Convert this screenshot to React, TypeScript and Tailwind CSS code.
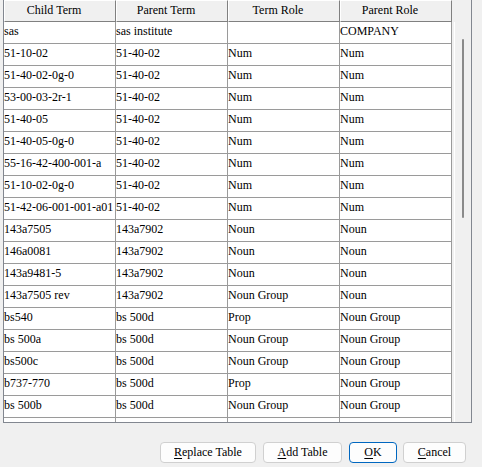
const rows: string[][] = [
  ['sas', 'sas institute', '', 'COMPANY'],
  ['51-10-02', '51-40-02', 'Num', 'Num'],
  ['51-40-02-0g-0', '51-40-02', 'Num', 'Num'],
  ['53-00-03-2r-1', '51-40-02', 'Num', 'Num'],
  ['51-40-05', '51-40-02', 'Num', 'Num'],
  ['51-40-05-0g-0', '51-40-02', 'Num', 'Num'],
  ['55-16-42-400-001-a', '51-40-02', 'Num', 'Num'],
  ['51-10-02-0g-0', '51-40-02', 'Num', 'Num'],
  ['51-42-06-001-001-a01', '51-40-02', 'Num', 'Num'],
  ['143a7505', '143a7902', 'Noun', 'Noun'],
  ['146a0081', '143a7902', 'Noun', 'Noun'],
  ['143a9481-5', '143a7902', 'Noun', 'Noun'],
  ['143a7505 rev', '143a7902', 'Noun Group', 'Noun'],
  ['bs540', 'bs 500d', 'Prop', 'Noun Group'],
  ['bs 500a', 'bs 500d', 'Noun Group', 'Noun Group'],
  ['bs500c', 'bs 500d', 'Noun Group', 'Noun Group'],
  ['b737-770', 'bs 500d', 'Prop', 'Noun Group'],
  ['bs 500b', 'bs 500d', 'Noun Group', 'Noun Group'],
  ['', '', '', ''],
]

const headers = ['Child Term', 'Parent Term', 'Term Role', 'Parent Role']

const DialogButton = ({
  mnemonic,
  rest,
  width,
  primary,
}: {
  mnemonic: string
  rest: string
  width: string
  primary?: boolean
}) => (
  <button
    className={`${width} h-[21px] rounded-[4px] bg-[#fdfdfd] font-['Liberation_Serif',serif] text-[12px] leading-[19px] text-black ${
      primary ? 'border border-[#0067c0]' : 'border border-[#d0d0d0]'
    }`}
  >
    <u className="underline-offset-[2px]">{mnemonic}</u>
    {rest}
  </button>
)

const App = () => {
  return (
    <div className="w-[482px] h-[467px] bg-[#f0f0f0] overflow-hidden font-['Liberation_Serif',serif]">
      <div className="ml-[3px] w-[469px] h-[423px] flex border-l border-r border-b border-[#828790]">
        <div className="w-[448px] h-full overflow-hidden bg-white">
          <div className="flex">
            {headers.map((h) => (
              <div
                key={h}
                className="w-[112px] h-[22px] bg-[#f0f0f0] border-t border-l border-t-white border-l-white border-r border-b border-r-[#808080] border-b-[#808080] pr-[12px] text-center text-[12px] leading-[19px] text-black"
              >
                {h}
              </div>
            ))}
          </div>
          {rows.map((r, i) => (
            <div key={i} className="flex">
              {r.map((c, j) => (
                <div
                  key={j}
                  className="w-[112px] h-[22px] shrink-0 border-r border-b border-[#9a9a9a] text-[12px] leading-[19px] text-black whitespace-nowrap overflow-hidden"
                >
                  {c}
                </div>
              ))}
            </div>
          ))}
        </div>
        <div className="w-[19px] h-full flex">
          <div className="w-[2px]" />
          <div className="w-[1px] mt-[22px] bg-white" />
          <div className="w-[7px]" />
          <div className="w-[2px] h-[179px] mt-[39px] rounded-full bg-[#8a8a8a]" />
        </div>
      </div>
      <div className="flex justify-end pr-[16px] mt-[19px]">
        <DialogButton mnemonic="R" rest="eplace Table" width="w-[96px]" />
        <div className="w-[7px]" />
        <DialogButton mnemonic="A" rest="dd Table" width="w-[79px]" />
        <div className="w-[7px]" />
        <DialogButton mnemonic="O" rest="K" width="w-[48px]" primary />
        <div className="w-[6px]" />
        <DialogButton mnemonic="C" rest="ancel" width="w-[63px]" />
      </div>
    </div>
  )
}

export default App
